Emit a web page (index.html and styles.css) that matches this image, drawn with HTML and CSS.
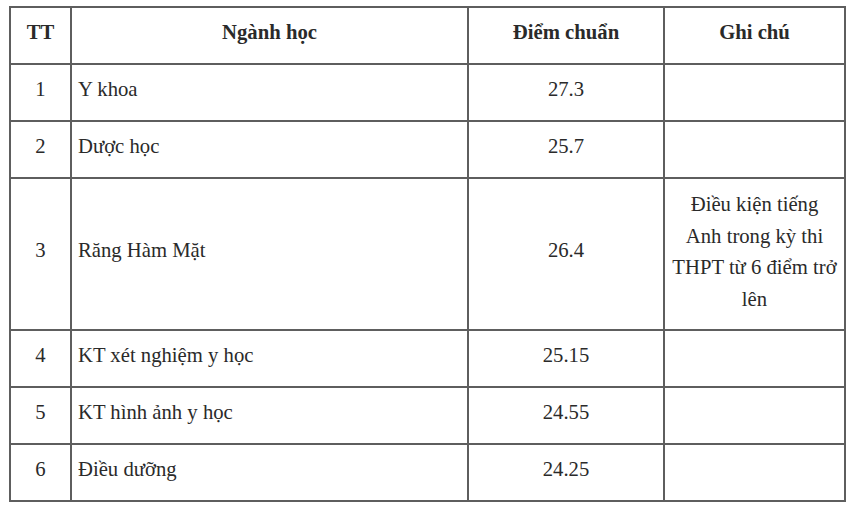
FILE: index.html
```html
<!DOCTYPE html>
<html lang="vi">
<head>
<meta charset="utf-8">
<link rel="stylesheet" href="styles.css">
</head>
<body>
<table class="scores">
  <colgroup>
    <col class="c-tt">
    <col class="c-name">
    <col class="c-score">
    <col class="c-note">
  </colgroup>
  <thead>
    <tr class="row">
      <th>TT</th>
      <th>Ngành học</th>
      <th>Điểm chuẩn</th>
      <th>Ghi chú</th>
    </tr>
  </thead>
  <tbody>
    <tr class="row"><td class="center">1</td><td>Y khoa</td><td class="center">27.3</td><td></td></tr>
    <tr class="row"><td class="center">2</td><td>Dược học</td><td class="center">25.7</td><td></td></tr>
    <tr class="row tall"><td class="center">3</td><td>Răng Hàm Mặt</td><td class="center">26.4</td><td class="center note">Điều kiện tiếng<br>Anh trong kỳ thi<br>THPT từ 6 điểm trở<br>lên</td></tr>
    <tr class="row"><td class="center">4</td><td>KT xét nghiệm y học</td><td class="center">25.15</td><td></td></tr>
    <tr class="row"><td class="center">5</td><td>KT hình ảnh y học</td><td class="center">24.55</td><td></td></tr>
    <tr class="row"><td class="center">6</td><td>Điều dưỡng</td><td class="center">24.25</td><td></td></tr>
  </tbody>
</table>
</body>
</html>
```

FILE: styles.css
```css
html, body {
  background: #ffffff;
}
body {
  margin: 6px 0 0 9px;
  font-family: "Liberation Serif", "Times New Roman", serif;
  color: #2a2a2a;
}
.scores {
  border-collapse: collapse;
  table-layout: fixed;
  width: 835px;
  font-size: 20.7px;
}
.c-tt { width: 61px; }
.c-name { width: 397px; }
.c-score { width: 196px; }
.c-note { width: 181px; }
.scores th,
.scores td {
  border: 2px solid #5e5e5e;
  padding: 0 6px 7px 6px;
  vertical-align: middle;
}
.scores th {
  font-weight: bold;
  text-align: center;
  padding-bottom: 6px;
}
.row { height: 57px; }
.row.tall { height: 152px; }
.center { text-align: center; }
.scores .note {
  line-height: 31.5px;
  padding: 0 3px 4px 3px;
  white-space: nowrap;
}
```
